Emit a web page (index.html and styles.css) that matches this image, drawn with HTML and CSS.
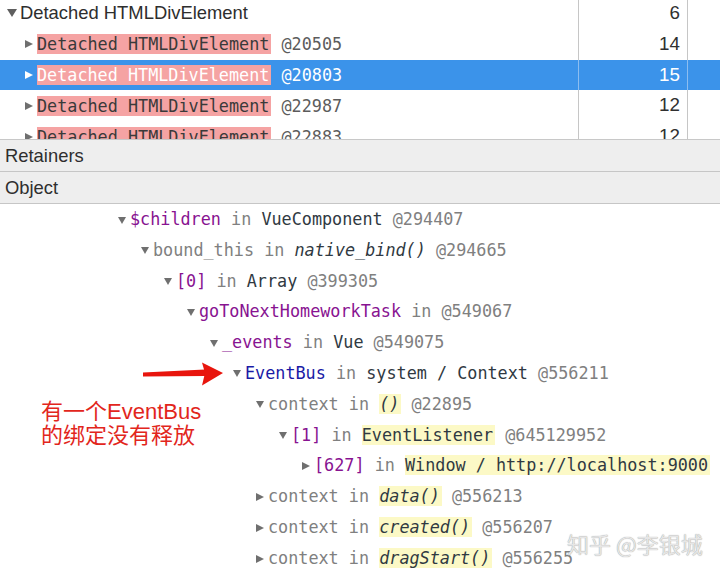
FILE: index.html
```html
<!DOCTYPE html>
<html>
<head>
<meta charset="utf-8">
<link rel="stylesheet" href="styles.css">
</head>
<body>
<div class="page">
  <div class="top">
    <div class="rows">
      <div class="trow">
        <div class="c-name first"><span class="tg tg-big"><span class="tri-down big"></span></span><span class="sans">Detached HTMLDivElement</span></div>
        <div class="c-num">6</div>
        <div class="c-extra"></div>
      </div>
      <div class="trow">
        <div class="c-name child"><span class="tg"><span class="tri-right"></span></span><span class="mono"><span class="hl-red">Detached HTMLDivElement</span> <span class="addr">@20505</span></span></div>
        <div class="c-num">14</div>
        <div class="c-extra"></div>
      </div>
      <div class="trow sel">
        <div class="c-name child"><span class="tg"><span class="tri-right"></span></span><span class="mono"><span class="hl-red">Detached HTMLDivElement</span> <span class="addr">@20803</span></span></div>
        <div class="c-num">15</div>
        <div class="c-extra"></div>
      </div>
      <div class="trow">
        <div class="c-name child"><span class="tg"><span class="tri-right"></span></span><span class="mono"><span class="hl-red">Detached HTMLDivElement</span> <span class="addr">@22987</span></span></div>
        <div class="c-num">12</div>
        <div class="c-extra"></div>
      </div>
      <div class="trow">
        <div class="c-name child"><span class="tg"><span class="tri-right"></span></span><span class="mono"><span class="hl-red">Detached HTMLDivElement</span> <span class="addr">@22883</span></span></div>
        <div class="c-num">12</div>
        <div class="c-extra"></div>
      </div>
    </div>
  </div>
  <div class="hdr">Retainers</div>
  <div class="hdr">Object</div>
  <div class="tree">
    <div class="node d0"><span class="tg"><span class="tri-down"></span></span><span class="p">$children</span> <span class="in">in</span> <span class="cls">VueComponent</span> <span class="at">@294407</span></div>
    <div class="node d1"><span class="tg"><span class="tri-down"></span></span><span class="g">bound_this</span> <span class="in">in</span> <span class="cls it">native_bind()</span> <span class="at">@294665</span></div>
    <div class="node d2"><span class="tg"><span class="tri-down"></span></span><span class="p">[0]</span> <span class="in">in</span> <span class="cls">Array</span> <span class="at">@399305</span></div>
    <div class="node d3"><span class="tg"><span class="tri-down"></span></span><span class="p">goToNextHomeworkTask</span> <span class="in">in</span> <span class="at">@549067</span></div>
    <div class="node d4"><span class="tg"><span class="tri-down"></span></span><span class="p">_events</span> <span class="in">in</span> <span class="cls">Vue</span> <span class="at">@549075</span></div>
    <div class="node d5"><span class="tg"><span class="tri-down"></span></span><span class="b">EventBus</span> <span class="in">in</span> <span class="cls">system / Context</span> <span class="at">@556211</span></div>
    <div class="node d6"><span class="tg"><span class="tri-down"></span></span><span class="g">context</span> <span class="in">in</span> <span class="cls it hl-y">()</span> <span class="at">@22895</span></div>
    <div class="node d7"><span class="tg"><span class="tri-down"></span></span><span class="p">[1]</span> <span class="in">in</span> <span class="cls hl-y">EventListener</span> <span class="at">@645129952</span></div>
    <div class="node d8"><span class="tg"><span class="tri-right"></span></span><span class="p">[627]</span> <span class="in">in</span> <span class="cls hl-y">Window / http://localhost:9000</span></div>
    <div class="node d6"><span class="tg"><span class="tri-right"></span></span><span class="g">context</span> <span class="in">in</span> <span class="cls it hl-y">data()</span> <span class="at">@556213</span></div>
    <div class="node d6"><span class="tg"><span class="tri-right"></span></span><span class="g">context</span> <span class="in">in</span> <span class="cls it hl-y">created()</span> <span class="at">@556207</span></div>
    <div class="node d6"><span class="tg"><span class="tri-right"></span></span><span class="g">context</span> <span class="in">in</span> <span class="cls it hl-y">dragStart()</span> <span class="at">@556255</span></div>
  </div>

  <svg class="arrow" width="90" height="30" viewBox="140 360 90 30">
    <polygon points="143,372.6 205,369.5 205,376 143,376.6" fill="#e8150d"/>
    <polygon points="202,362.5 223,373 202,385.5 205,373" fill="#e8150d"/>
  </svg>
  <div class="note">有一个EventBus<br>的绑定没有释放</div>
  <div class="mark">知乎 @李银城</div>
</div>
</body>
</html>
```
FILE: styles.css
```css
html, body {
  margin: 0;
  padding: 0;
  background: #ffffff;
}
.page {
  position: relative;
  width: 720px;
  height: 572px;
  overflow: hidden;
  font-family: "Liberation Sans", Arial, sans-serif;
  color: #303030;
}
.top {
  height: 140px;
  box-sizing: border-box;
  border-bottom: 1px solid #c8c8c8;
  overflow: hidden;
}
.rows {
  margin-top: -2px;
}
.trow {
  display: grid;
  grid-template-columns: 579px 109px 1fr;
  height: 30.8px;
}
.trow .c-name,
.trow .c-num {
  box-sizing: border-box;
  border-right: 1px solid #c6c6c6;
}
.c-name {
  display: flex;
  align-items: center;
  white-space: nowrap;
  overflow: hidden;
}
.c-name.first { padding-left: 7px; }
.c-name.child { padding-left: 25px; }
.c-num {
  text-align: right;
  padding-right: 7px;
  font-size: 18.8px;
  line-height: 30.8px;
}
.sans {
  font-size: 18.4px;
  color: #2e2e2e;
}
.mono {
  font-family: "DejaVu Sans Mono", "Liberation Mono", monospace;
  font-size: 16.8px;
  color: #333;
}
.hl-red {
  background: #f5a3a3;
  padding-right: 2px;
  color: #3a3a3a;
}
.addr { color: #5c5c5c; }
.trow.sel {
  background: #3b93ea;
  color: #fff;
}
.trow.sel .c-name,
.trow.sel .c-num {
  border-right-color: #8cbdf0;
}
.trow.sel .hl-red,
.trow.sel .addr { color: #fff; }
.trow.sel .tri-right { border-left-color: #fff; }

.tg {
  flex: none;
  width: 12px;
  display: inline-flex;
  align-items: center;
  vertical-align: middle;
}
.tg-big { width: 13px; }
.tri-down {
  width: 0;
  height: 0;
  border-left: 4.5px solid transparent;
  border-right: 4.5px solid transparent;
  border-top: 7px solid #6f6f6f;
}
.tri-down.big {
  border-left-width: 5px;
  border-right-width: 5px;
  border-top-width: 8px;
  border-top-color: #5f5f5f;
}
.tri-right {
  width: 0;
  height: 0;
  border-top: 4.5px solid transparent;
  border-bottom: 4.5px solid transparent;
  border-left: 8px solid #6f6f6f;
}

.hdr {
  height: 32px;
  box-sizing: border-box;
  border-bottom: 1px solid #c6c6c6;
  background: #eeeeee;
  padding-left: 5px;
  font-size: 18.4px;
  line-height: 31px;
  color: #2e2e2e;
}

.tree {
  font-family: "DejaVu Sans Mono", "Liberation Mono", monospace;
  font-size: 16.8px;
}
.node {
  display: block;
  height: 30.8px;
  line-height: 30.8px;
  white-space: nowrap;
  color: #303942;
}
.d0 { padding-left: 118px; }
.d1 { padding-left: 141px; }
.d2 { padding-left: 164px; }
.d3 { padding-left: 187px; }
.d4 { padding-left: 210px; }
.d5 { padding-left: 233px; }
.d6 { padding-left: 256px; }
.d7 { padding-left: 279px; }
.d8 { padding-left: 302px; }
.p { color: #881391; }
.g { color: #808080; }
.b { color: #1a1aa6; }
.in { color: #808080; }
.cls { color: #303942; }
.it { font-style: italic; }
.at { color: #808080; }
.hl-y {
  background: #fcf9c6;
  padding-right: 2px;
}

.arrow {
  position: absolute;
  left: 140px;
  top: 360px;
}
.note {
  position: absolute;
  left: 41px;
  top: 400px;
  font-family: "Liberation Sans", "Noto Sans CJK SC", sans-serif;
  font-size: 22px;
  line-height: 24px;
  color: #e2261c;
}
.mark {
  position: absolute;
  left: 567px;
  top: 529px;
  font-family: "Noto Sans CJK SC", "Noto Sans", sans-serif;
  font-size: 22px;
  line-height: 28px;
  color: #e6e6e6;
  text-shadow: 0 0 1px #8a8a8a;
  white-space: nowrap;
}
```
